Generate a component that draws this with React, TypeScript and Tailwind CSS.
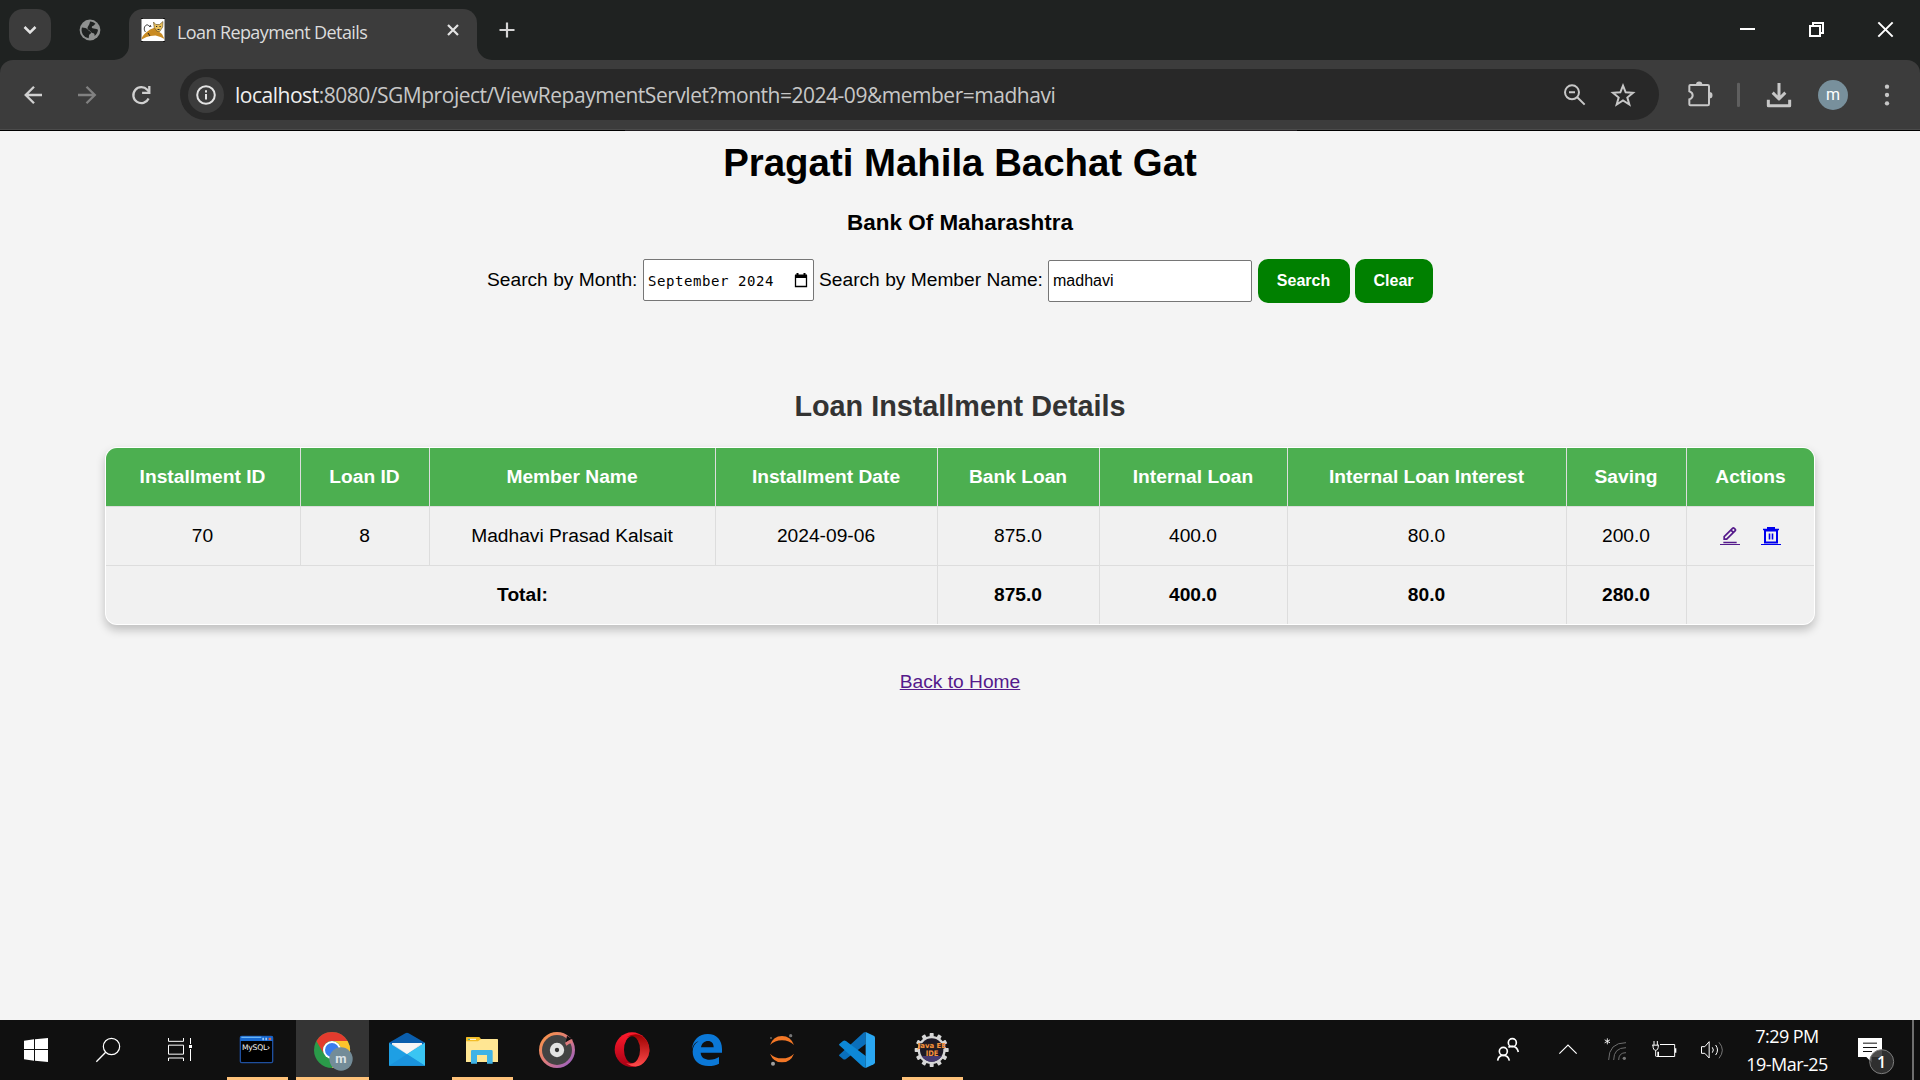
import React from "react";
import { BiEditAlt } from "react-icons/bi";

type PicProps = { v: string; w: number; h: number; children: React.ReactNode };

const Pic = ({ v, w, h, children }: PicProps) => (
  <svg className="block shrink-0" viewBox={v} width={w} height={h} fill="none">
    {children}
  </svg>
);

const UI = "font-['Open_Sans','Noto_Sans',sans-serif]";

function TabStrip() {
  return (
    <div className="flex h-[60px] items-end bg-[#1f2221]">
      <div className="mb-[9px] ml-[9px] flex h-[42px] w-[42px] items-center justify-center rounded-[14px] bg-[#3c3c3c]">
        <Pic v="0 0 14 10" w={14} h={10}>
          <path d="M1.5 2 7 7.5 12.5 2" stroke="#e3e3e3" strokeWidth="2.5" />
        </Pic>
      </div>
      <div className="flex w-[63px] justify-center pl-[14px]">
        <Pic v="0 0 22 60" w={22} h={60}>
          <circle cx="11" cy="30" r="10.4" fill="#8f9190" />
          <path d="M3 27.500c2 .2 5 .6 6 2.200 1 1.600 2.700 1.400 3 2.800.3 1.500-1.800 1.300-2 3-.2 1.200-.1 2.200-.4 2.800A8.300 8.300 0 0 1 3 27.500z" fill="#1f2221" />
          <path d="M11 21.600c2.400.1 4.300 1 5.600 2.500-1.400.2-1.200 1.600-2.700 1.900-1.300.2-1.500 1.700-.4 2.300 1.500.8 3.500-.2 5.500 1.500-.2 2.500-1.500 4.800-3.400 6.200 .3-2-.6-3-2.200-3.100-1.800-.1-1.500-2.100-3.200-2.700-1.900-.7-2.200-2.600-.9-4.300.9-1.200 1.500-2.500 1.700-4.300z" fill="#1f2221" />
        </Pic>
      </div>
      <Pic v="0 0 15 15" w={15} h={15}>
        <path d="M15 0v15H0A15 15 0 0 0 15 0z" fill="#3c3c3c" />
      </Pic>
      <div className="flex h-[51px] w-[348px] items-center rounded-t-[14px] bg-[#3c3c3c] pb-[9px] pl-[12px]">
        <Pic v="0 0 24 24" w={24} h={24}>
          <path d="M.5 1h23v22H.5z" fill="#fff" />
          <path d="M0 .5h2M22 .5h2M0 23.500h2M22 23.500h2" stroke="#111" />
          <path d="M4.500 14c-2-2-1.500-6 1-7 2-.6 2 1 3.500 2" stroke="#333" strokeWidth="1" />
          <path d="m9 11.500 5-2 3 3.500 4 3 2.500 5-4-2-5-1.500-5 .5-4 1-5 2.500c.4-3 2-4.500 4-6.500z" fill="#c98b22" />
          <path d="m12.500 4 2.300 2.500h3.700L22 3.500l-.3 5.500-3 4.500h-2.500l-3-4z" fill="#e9c05a" stroke="#5f4a20" strokeWidth=".6" />
          <path d="M15 8.500h1.200M18.500 8.500h1.200M16.500 11.500h2M7 15l2 3M9 7l1 2" stroke="#222" strokeWidth="1" />
        </Pic>
        <span className={UI + " ml-[12px] w-[269px] pt-[3px] text-[18px] leading-[24px] tracking-[-0.6px] whitespace-nowrap text-[#dcdcdc]"}>
          Loan Repayment Details
        </span>
        <Pic v="0 0 14 14" w={14} h={14}>
          <path d="m2 2 10 10M12 2 2 12" stroke="#e3e3e3" strokeWidth="2.200" />
        </Pic>
      </div>
      <Pic v="0 0 15 15" w={15} h={15}>
        <path d="M0 0v15h15A15 15 0 0 1 0 0z" fill="#3c3c3c" />
      </Pic>
      <Pic v="492 0 60 60" w={60} h={60}>
        <path d="M499.500 30h15M507 22.500v15" stroke="#d5d5d5" strokeWidth="2.200" />
      </Pic>
      <div className="grow" />
      <Pic v="600 0 660 180" w={220} h={60}>
        <path d="M720 87h45" stroke="#fff" strokeWidth="6" />
        <path d="M930 78h30v30h-30zM939 78v-9h30v30h-9" stroke="#fff" strokeWidth="6" />
        <path d="m1135 67 43 43M1178 67l-43 43" stroke="#fff" strokeWidth="6" />
      </Pic>
    </div>
  );
}

function Toolbar() {
  return (
    <div className="bg-[#1f2221]">
      <div className="flex h-[69px] rounded-t-[13px] bg-[#3c3c3c]">
        <Pic v="0 60 60 69" w={60} h={69}>
          <path d="M42 95H26M34 86.700 25.700 95l8.300 8.300" stroke="#d0d0d0" strokeWidth="2.300" />
        </Pic>
        <Pic v="60 60 54 69" w={54} h={69}>
          <path d="M78 95h16M86.500 86.700l8.300 8.300-8.300 8.300" stroke="#818181" strokeWidth="2.300" />
        </Pic>
        <Pic v="114 60 66 69" w={66} h={69}>
          <path d="M148.600 98.500a8 8 0 1 1-1.300-8.700l1.800 2" stroke="#d0d0d0" strokeWidth="2.300" />
          <path d="M149.300 86v6.900h-7.200" stroke="#d0d0d0" strokeWidth="2.300" />
        </Pic>
        <div className="mt-[9px] flex h-[51px] w-[1479px] items-center rounded-full bg-[#282828] pl-[8px]">
          <div className="flex h-[36px] w-[36px] shrink-0 items-center justify-center rounded-full bg-[#3c3c3c]">
            <Pic v="0 0 20 20" w={20} h={20}>
              <circle cx="10" cy="10" r="8.800" stroke="#e3e3e3" strokeWidth="2" />
              <path d="M10 9v5.500M10 5.300v2.200" stroke="#e3e3e3" strokeWidth="2" />
            </Pic>
          </div>
          <div className={UI + " ml-[11px] grow text-[21px] leading-[30px] tracking-[-0.48px] whitespace-nowrap text-[#c7c7c7]"}>
            <span className="text-[#efefef]">localhost</span>:8080/SGMproject/ViewRepaymentServlet?month=2024-09&amp;member=madhavi
          </div>
          <Pic v="150 207 327 153" w={109} h={51}>
            <circle cx="216" cy="277" r="21" stroke="#c7c7c7" strokeWidth="6" />
            <path d="M207 277h18M231 291l23 23" stroke="#c7c7c7" strokeWidth="6" />
            <path d="m369 257 8 20 22 1.500-17 14 6 21-19-12-19 12 6-21-17-14 22-1.500z" stroke="#c7c7c7" strokeWidth="6" />
          </Pic>
        </div>
        <Pic v="477 180 783 207" w={261} h={69}>
          <path d="M568 258q0-3 3-3h52q4 0 4 4v53q0 4-4 4h-52q-3 0-3-3v-15q10-3 10-12t-10-12z" stroke="#c7c7c7" strokeWidth="6" />
          <path d="M588 254a9.500 9.500 0 0 1 19 0zM628 276a9.500 9.500 0 0 1 0 19z" fill="#c7c7c7" />
          <rect x="711" y="248" width="9" height="73" rx="4" fill="#5f5f5f" />
          <path d="M837 249v47M818 278l19 19 19-19M805 299v18h64v-18" stroke="#c7c7c7" strokeWidth="9" strokeLinejoin="round" />
          <circle cx="999" cy="285" r="45" fill="#78909c" />
          <text x="999" y="299" textAnchor="middle" fontFamily="Roboto" fontSize="48" fill="#fff">m</text>
          <g fill="#c7c7c7">
            <circle cx="1161" cy="260" r="6.500" />
            <circle cx="1161" cy="285" r="6.500" />
            <circle cx="1161" cy="310" r="6.500" />
          </g>
        </Pic>
      </div>
      <div className="h-px bg-[#4b4b4b]" />
      <div className="flex h-px bg-black">
        <div className="ml-[625px] w-[672px] bg-[#221f22]" />
      </div>
    </div>
  );
}

const columns = [
  { title: "Installment ID", value: "70" },
  { title: "Loan ID", value: "8" },
  { title: "Member Name", value: "Madhavi Prasad Kalsait" },
  { title: "Installment Date", value: "2024-09-06" },
  { title: "Bank Loan", value: "875.0" },
  { title: "Internal Loan", value: "400.0" },
  { title: "Internal Loan Interest", value: "80.0" },
  { title: "Saving", value: "200.0" },
];
const totals = ["875.0", "400.0", "80.0", "280.0"];
const row =
  "grid grid-cols-[195px_129px_286px_222px_162px_188px_279px_120px_127px] text-center leading-[58px]";

function InstallmentTable() {
  return (
    <div className="mx-auto h-[178px] w-[1710px] overflow-hidden rounded-[12px] bg-white p-px shadow-[0_5px_10px_rgba(0,0,0,0.22)]">
      <div className="overflow-hidden rounded-[11px] bg-[#f1f1f1]">
        <div className={row + " h-[58px] bg-[#4caf50] font-bold text-white"}>
          {columns.map((c) => (
            <div key={c.title} className="border-r border-[#ddd] pr-px">{c.title}</div>
          ))}
          <div>Actions</div>
        </div>
        <div className={row + " h-[59px] border-t border-[#ddd]"}>
          {columns.map((c) => (
            <div key={c.title} className="border-r border-[#ddd] pr-px">{c.value}</div>
          ))}
          <div className="flex items-start justify-center gap-[21px] pt-[19px] pr-px">
            <a className="border-b border-[#551a8b] text-[#551a8b]">
              <BiEditAlt size={20} className="h-[18px]" viewBox="0 2 24 20" />
            </a>
            <a className="border-b border-[#0000ee] text-[#0000ee]">
              <Pic v="0 0 20 18" w={20} h={18}>
                <path d="M4 4.500h12v12H4zM7 3.500V2h6v1.500" stroke="currentColor" strokeWidth="2" />
                <path d="M2 3.500h16M8.500 7.500v6M11.500 7.500v6" stroke="currentColor" strokeWidth="1.600" />
              </Pic>
            </a>
          </div>
        </div>
        <div className={row + " h-[59px] border-t border-[#ddd] font-bold"}>
          <div className="col-span-4 border-r border-[#ddd] pl-[2px]">Total:</div>
          {totals.map((t) => (
            <div key={t} className="border-r border-[#ddd] pr-px">{t}</div>
          ))}
          <div />
        </div>
      </div>
    </div>
  );
}

function Page() {
  return (
    <main className="h-[889px] bg-[#f4f4f4] pt-[10px] font-['Liberation_Sans',Arial,sans-serif] text-[19.2px] text-black">
      <h1 className="text-center text-[38.4px] leading-[44px] font-bold">Pragati Mahila Bachat Gat</h1>
      <h3 className="mt-[25px] text-center text-[22.46px] leading-[26px] font-bold">Bank Of Maharashtra</h3>
      <form className="mt-[23px] flex h-[44px] items-start pl-[487px] leading-[22px]">
        <label className="w-[156px] pt-[10px]">Search by Month:</label>
        <div className="flex h-[42px] w-[171px] items-center justify-between rounded-[2px] border border-[#767676] bg-white pr-[5px] pl-[4px] font-['DejaVu_Sans_Mono',monospace] text-[14px] leading-[20px] tracking-[0.57px] whitespace-nowrap">
          <span className="pt-px">September 2024</span>
          <Pic v="0 0 14 15" w={14} h={15}>
            <path d="M1.500 3v10.500h11V3z" stroke="#000" strokeWidth="1.300" />
            <path d="M1 1.500h12V5H1zM2.500 0h2v2h-2zM9.500 0h2v2h-2z" fill="#000" />
          </Pic>
        </div>
        <label className="ml-[5px] w-[229px] pt-[10px]">Search by Member Name:</label>
        <div className="mt-px h-[42px] w-[204px] rounded-[2px] border border-[#767676] bg-white pt-[9px] pl-[4px] text-[16px]">madhavi</div>
        <button type="button" className="ml-[6px] h-[44px] w-[92px] rounded-[10px] bg-[#008000] pr-px pb-px text-[16px] font-bold text-white">Search</button>
        <button type="button" className="ml-[5px] h-[44px] w-[78px] rounded-[10px] bg-[#008000] pr-px pb-px text-[16px] font-bold text-white">Clear</button>
      </form>
      <h2 className="mt-[87px] mb-[24px] text-center text-[28.8px] leading-[33px] font-bold text-[#333]">Loan Installment Details</h2>
      <InstallmentTable />
      <p className="mt-[46px] text-center leading-[22px]">
        <a className="text-[#551a8b] underline">Back to Home</a>
      </p>
    </main>
  );
}

type AppCellProps = { x: number; running?: boolean; active?: boolean; children: React.ReactNode };

const AppCell = ({ x, running, active, children }: AppCellProps) => (
  <svg className="block shrink-0" viewBox={`${x} 30 225 180`} width={75} height={60} fill="none">
    {active && <path d={`M${x + 3} 30h219v180h-219z`} fill="#343434" />}
    {children}
    {running && <path d={`M${x + 21} 201h183v9h-183z`} fill="#fec27a" />}
    {active && <path d={`M${x + 3} 201h219v9h-219z`} fill="#fec27a" />}
  </svg>
);

const teeth = Array.from({ length: 12 }, (_, i) => i * 30);

function Taskbar() {
  return (
    <footer className="flex h-[60px] bg-[#101010]">
      <Pic v="0 30 216 180" w={72} h={60}>
        <path d="m72 92 30-4v29H72zm33-4 39-4v33h-39zm-33 32h30v32l-30-4zm33 0h39v36l-39-4z" fill="#fff" />
      </Pic>
      <Pic v="216 30 216 180" w={72} h={60}>
        <circle cx="334.500" cy="109.500" r="24.500" stroke="#fff" strokeWidth="3.600" />
        <path d="m317 127-28 28" stroke="#fff" strokeWidth="4" />
      </Pic>
      <Pic v="432 30 228 180" w={76} h={60}>
        <path d="M505.500 84v10h45V84M505.500 105.500h45v27h-45zM505.500 153v-9h45v9M571.500 84v18M571.500 117v36" stroke="#fff" strokeWidth="3" />
        <path d="M567 105h9v9h-9z" fill="#fff" />
      </Pic>

      <AppCell x={660} running>
        <rect x="721" y="79" width="97" height="79" rx="4" fill="#000" stroke="#1f4f9e" strokeWidth="4" />
        <path d="M721 79h97v14h-97z" fill="#1769d1" />
        <path d="M724 82h60" stroke="#67b4f5" strokeWidth="4" />
        <path d="M787 87h5M796 87h5" stroke="#9cc8f5" strokeWidth="7" />
        <path d="M806 87h7" stroke="#dd6547" strokeWidth="7" />
        <text x="726" y="120" fontFamily="DejaVu Sans" fontSize="23" textLength="84" fill="#f4f4f4">MySQL›</text>
      </AppCell>

      <AppCell x={885} active>
        <circle cx="996" cy="120" r="54" fill="#2a9a49" />
        <path d="M949.200 93a54 54 0 0 1 93.600 0H996a27 27 0 0 0-23.400 40.500z" fill="#e33b2e" />
        <path d="M1042.800 93A54 54 0 0 1 996 174l23.400-40.500A27 27 0 0 0 996 93z" fill="#fcc42c" />
        <circle cx="996" cy="120" r="27" fill="#fff" />
        <circle cx="996" cy="120" r="21" fill="#3a7ded" />
        <circle cx="1023" cy="147" r="35" fill="#738c98" />
        <text x="1023" y="159" textAnchor="middle" fontFamily="Roboto" fontWeight="700" fontSize="39" fill="#dce3e7">m</text>
      </AppCell>

      <AppCell x={1110}>
        <path d="m1167 98 49-28q5-3 10 0l49 28-40 45h-30z" fill="#0a5ead" />
        <path d="M1176 99h90v40h-90z" fill="#f4f4f4" />
        <path d="m1176 99 45 32 45-32-5 30h-80z" fill="#dfe2e4" />
        <path d="m1176 99 45 32 45-32z" fill="#f6f6f6" />
        <path d="m1167 98 54 35 54-35v69h-108z" fill="#1e9fe4" />
        <path d="m1221 133 54-35v69z" fill="#3ac5f3" />
        <path d="m1167 167 108 0-54-34z" fill="#1a93dd" />
      </AppCell>

      <AppCell x={1335} running>
        <path d="M1398 83q0-2 2-2h37q3 0 5 5l2 2v20h-46z" fill="#f3bd26" />
        <path d="M1398 94h36l9-7h49q2 0 2 2v67h-96z" fill="#ffe693" />
        <path d="M1404 88h24" stroke="#fff" strokeWidth="3" />
        <path d="M1404 88h6" stroke="#2aa198" strokeWidth="3" />
        <path d="M1413 161v-37q0-4 4-4h57q4 0 4 4v37h-17v-26h-30v26z" fill="#3fb3e6" />
      </AppCell>

      <AppCell x={1560}>
        <defs>
          <linearGradient id="ring" x1="0" y1="0" x2="1" y2="1">
            <stop offset="0" stopColor="#ff9a3c" />
            <stop offset=".5" stopColor="#dd7a7d" />
            <stop offset="1" stopColor="#8b5bd0" />
          </linearGradient>
        </defs>
        <circle cx="1671" cy="120" r="54" fill="url(#ring)" />
        <circle cx="1671" cy="120" r="45" fill="#434343" />
        <path d="m1701 77 14 9-18 12z" fill="#101010" />
        <path d="M1695 98q8-6 22-10v10q-9 2-18 9z" fill="#dd7a7d" />
        <circle cx="1671" cy="120" r="21.500" fill="#e3e3e3" />
        <circle cx="1671" cy="120" r="6.500" fill="#333" />
      </AppCell>

      <AppCell x={1785}>
        <defs>
          <linearGradient id="opl" x1="0" y1="0" x2="0" y2="1">
            <stop offset="0" stopColor="#ff1b2d" />
            <stop offset="1" stopColor="#a70014" />
          </linearGradient>
          <linearGradient id="opr" x1="0" y1="0" x2="0" y2="1">
            <stop offset="0" stopColor="#9c0000" />
            <stop offset="1" stopColor="#ff4b4b" />
          </linearGradient>
        </defs>
        <circle cx="1896" cy="119" r="52" fill="url(#opl)" />
        <path d="M1878 82q40-24 64 13a52 52 0 0 1-4 55q-24 34-60 9 30 10 40-25 4-36-14-50-14-8-26-2z" fill="url(#opr)" />
        <ellipse cx="1896" cy="119" rx="24" ry="40" fill="#101010" />
      </AppCell>

      <AppCell x={2010}>
        <path d="M2076 117c2-28 22-45 47-45 28 0 43 19 43 45v11h-64c1 15 13 21 27 21 11 0 21-3 28-8v20c-8 5-19 7-31 7-30 0-48-18-48-43 0-14 6-25 18-31-9 2-16 9-20 23zm27-5h38c0-12-6-19-17-19s-19 7-21 19z" fill="#0b78d7" fillRule="evenodd" />
      </AppCell>

      <AppCell x={2235}>
        <path d="M2310 105q10-27 36-27t36 27q-14-14-36-14t-36 14zM2310 131q14 14 36 14t36-14q-10 26-36 26t-36-26z" fill="#f37726" />
        <circle cx="2372" cy="77" r="5" fill="#767677" />
        <circle cx="2313" cy="84" r="3" fill="#616262" />
        <circle cx="2319" cy="161" r="6" fill="#9e9e9e" />
      </AppCell>

      <AppCell x={2460}>
        <path d="m2518 134 69-63q3-4 10-5v36l-59 45q-5 3-9 0l-10-8q-4-3-1-5z" fill="#0a6fbb" />
        <path d="m2518 106 69 63q3 4 10 5v-36l-59-45q-5-3-9 0l-10 8q-4 3-1 5z" fill="#0d88d6" />
        <path d="m2597 66 24 11q4 2 4 6v74q0 4-4 6l-24 11z" fill="#2aa7f2" />
      </AppCell>

      <AppCell x={2685} running>
        <g fill="#d6d6d6">
          {teeth.map((a) => (
            <rect key={a} x="2789" y="69" width="12" height="18" rx="2" transform={`rotate(${a} 2795 120)`} />
          ))}
        </g>
        <circle cx="2795" cy="120" r="42" fill="#d6d6d6" />
        <circle cx="2795" cy="120" r="35" fill="#1d1a26" />
        <path d="M2765 138h60a35 35 0 0 1-60 0z" fill="#473a70" />
        <path d="M2757 99h76v18h-76z" fill="#2a2220" fillOpacity=".75" />
        <g fontFamily="DejaVu Sans" fontWeight="700" fill="#f8923c">
          <text x="2753" y="115" fontSize="21" textLength="85" lengthAdjust="spacingAndGlyphs">Java EE</text>
          <text x="2777" y="139" fontSize="23" textLength="38" lengthAdjust="spacingAndGlyphs">IDE</text>
        </g>
      </AppCell>

      <div className="grow" />
      <Pic v="60 30 204 180" w={68} h={60}>
        <g stroke="#fff" strokeWidth="5">
          <circle cx="157" cy="98" r="12" />
          <circle cx="130" cy="124" r="12" />
          <path d="M113 152q2-16 17-16t18 16M145 112q5-3 12-3 14 0 18 17" />
        </g>
      </Pic>
      <Pic v="264 30 135 180" w={45} h={60}>
        <path d="m298 131 26-26 26 26" stroke="#fff" strokeWidth="3.500" />
      </Pic>
      <Pic v="399 30 141 180" w={47} h={60}>
        <path d="M442 85v18M434 89.500l16 9M450 89.500l-16 9" stroke="#fff" strokeWidth="2.600" />
        <g stroke="#6e6e6e" strokeWidth="3">
          <path d="M446 150q0-52 52-52M461 150q0-37 37-37M476 150q0-22 22-22" />
        </g>
        <circle cx="493" cy="145" r="5" fill="#777" />
      </Pic>
      <Pic v="540 30 150 180" w={50} h={60}>
        <path d="M600 103.500h44v36h-55M587 121v18" stroke="#fff" strokeWidth="3" />
        <path d="M645 115h4v13h-4zM592 125h5v14h-5z" fill="#fff" />
        <path d="M576 105.500h21M582 93v12M592 93v12M579 106q0 15 8 15t8-15" stroke="#fff" strokeWidth="3" />
      </Pic>
      <Pic v="690 30 129 180" w={43} h={60}>
        <path d="M724.500 110v20h10l13 14V95l-13 15z" stroke="#fff" strokeWidth="3" />
        <path d="M757 112q6 8 0 16M767 105q11 15 0 30" stroke="#fff" strokeWidth="3" />
        <path d="M777 97q20 23 0 48" stroke="#777" strokeWidth="3" />
      </Pic>
      <div className={UI + " w-[110px] pt-[2px] pr-[2px] text-center text-[18px] leading-[28px] tracking-[-0.55px] whitespace-nowrap text-white"}>
        <div>7:29 PM</div>
        <div>19-Mar-25</div>
      </div>
      <Pic v="1149 30 207 180" w={69} h={60}>
        <path d="M1194 84h72v57h-30v17l-17-17h-25z" fill="#fff" />
        <path d="M1209 99.500h42M1209 112.500h42M1209 124.500h27" stroke="#101010" strokeWidth="3" />
        <circle cx="1265" cy="155" r="36" fill="#333" fillOpacity=".88" stroke="#7d7d7d" strokeWidth="3" />
        <text x="1265" y="173" textAnchor="middle" fontFamily="Open Sans" fontWeight="600" fontSize="48" fill="#fff">1</text>
      </Pic>
      <div className="mr-[6px] w-[2px] bg-[#6f6f6f]" />
    </footer>
  );
}

export default function App() {
  return (
    <div className="flex h-[1080px] w-[1920px] flex-col overflow-hidden">
      <TabStrip />
      <Toolbar />
      <Page />
      <Taskbar />
    </div>
  );
}
